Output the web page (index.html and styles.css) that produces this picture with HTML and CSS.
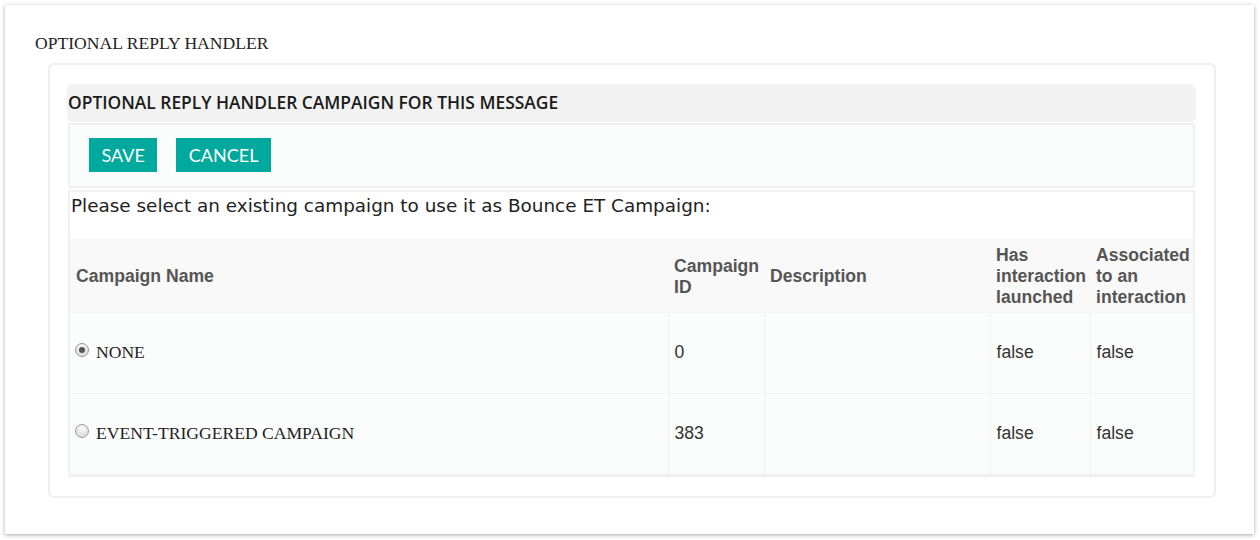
FILE: index.html
```html
<!DOCTYPE html>
<html lang="en">
  <head>
    <meta charset="UTF-8" />
    <title>Optional Reply Handler</title>
    <link rel="stylesheet" href="styles.css">
  </head>

  <body>
    <div class="card">
      <div class="card-title">OPTIONAL REPLY HANDLER</div>

      <div class="panel">
        <div class="panel-head">OPTIONAL REPLY HANDLER CAMPAIGN FOR THIS MESSAGE</div>

        <div class="actions">
          <button class="btn">SAVE</button>
          <button class="btn">CANCEL</button>
        </div>

        <div class="select-box">
          <p class="hint">Please select an existing campaign to use it as Bounce ET Campaign:</p>
          <table class="campaigns">
            <thead>
              <tr>
                <th class="c-name">Campaign Name</th>
                <th class="c-id">Campaign ID</th>
                <th class="c-desc">Description</th>
                <th class="c-launch">Has interaction launched</th>
                <th class="c-assoc">Associated to an interaction</th>
              </tr>
            </thead>
            <tbody>
              <tr>
                <td><label class="choice"><span class="radio checked"></span>NONE</label></td>
                <td>0</td>
                <td></td>
                <td>false</td>
                <td>false</td>
              </tr>
              <tr>
                <td><label class="choice"><span class="radio"></span>EVENT-TRIGGERED CAMPAIGN</label></td>
                <td>383</td>
                <td></td>
                <td>false</td>
                <td>false</td>
              </tr>
            </tbody>
          </table>
        </div>
      </div>
    </div>
  </body>
</html>
```

FILE: styles.css
```css
body {
  margin: 0;
  background: #ffffff;
}

.card {
  margin: 5px 6px 6px 5px;
  height: 529px;
  box-sizing: border-box;
  padding: 28px 38px 0 30px;
  background: #ffffff;
  box-shadow: 0 1px 4px rgba(0, 0, 0, 0.35);
}
.card-title {
  font-family: "Liberation Serif", serif;
  font-size: 17.6px;
  line-height: 20px;
  color: #222;
  margin-bottom: 10px;
}

.panel {
  margin-left: 13px;
  border: 2px solid #efefef;
  border-radius: 6px;
  padding: 19px 18px 19px 17px;
}
.panel-head {
  height: 38px;
  line-height: 37px;
  background: #f2f2f2;
  border-radius: 6px;
  padding-left: 1px;
  font-family: "Open Sans", sans-serif;
  font-weight: 600;
  font-size: 17.4px;
  color: #1a1a1a;
}

.actions {
  margin: 1px 1px 0 1px;
  border: 2px solid #f0f0f0;
  background: #fbfcfc;
  padding: 13px 19px 14px;
  display: flex;
  gap: 19px;
}
.btn {
  height: 34px;
  padding: 0 12.5px;
  border: none;
  background: #00a99d;
  color: #ffffff;
  font-family: Lato, sans-serif;
  font-size: 18px;
  cursor: pointer;
}

.select-box {
  margin: 2px 1px 0 1px;
  border: 2px solid #f0f0f0;
  border-bottom-width: 3px;
}
.hint {
  margin: 0;
  padding: 1px 1px 0;
  height: 45px;
  font-family: "DejaVu Sans", sans-serif;
  font-size: 18.4px;
  line-height: 26px;
  color: #222;
}

.campaigns {
  width: 100%;
  table-layout: fixed;
  border-collapse: collapse;
  font-family: "Liberation Sans", Arial, sans-serif;
  font-size: 17.6px;
}
.campaigns th {
  height: 74px;
  box-sizing: border-box;
  padding: 4px 6px 0;
  background: #f9f9f9;
  color: #555;
  font-weight: bold;
  line-height: 21px;
  text-align: left;
  vertical-align: middle;
}
.c-name { width: 598px; }
.c-id { width: 96px; }
.c-desc { width: 226px; }
.c-launch { width: 100px; }

.campaigns td {
  height: 80px;
  padding: 0 6px;
  background: #fbfcfc;
  color: #333;
  border-left: 1px solid #f1f3f3;
  border-top: 1px solid #f3f5f5;
  vertical-align: middle;
}
.campaigns td:first-child {
  border-left: none;
  padding-left: 5px;
}

.choice {
  display: flex;
  align-items: center;
  gap: 7px;
  font-family: "Liberation Serif", serif;
  font-size: 17.6px;
  color: #222;
  cursor: pointer;
}
.radio {
  width: 12px;
  height: 12px;
  border-radius: 50%;
  border: 1px solid #9c9c9c;
  background: radial-gradient(circle at 50% 30%, #fbfbfb, #d2d2d2);
  position: relative;
  top: -3px;
}
.radio.checked::after {
  content: "";
  position: absolute;
  left: 3px;
  top: 3px;
  width: 6px;
  height: 6px;
  border-radius: 50%;
  background: #555;
}
```
